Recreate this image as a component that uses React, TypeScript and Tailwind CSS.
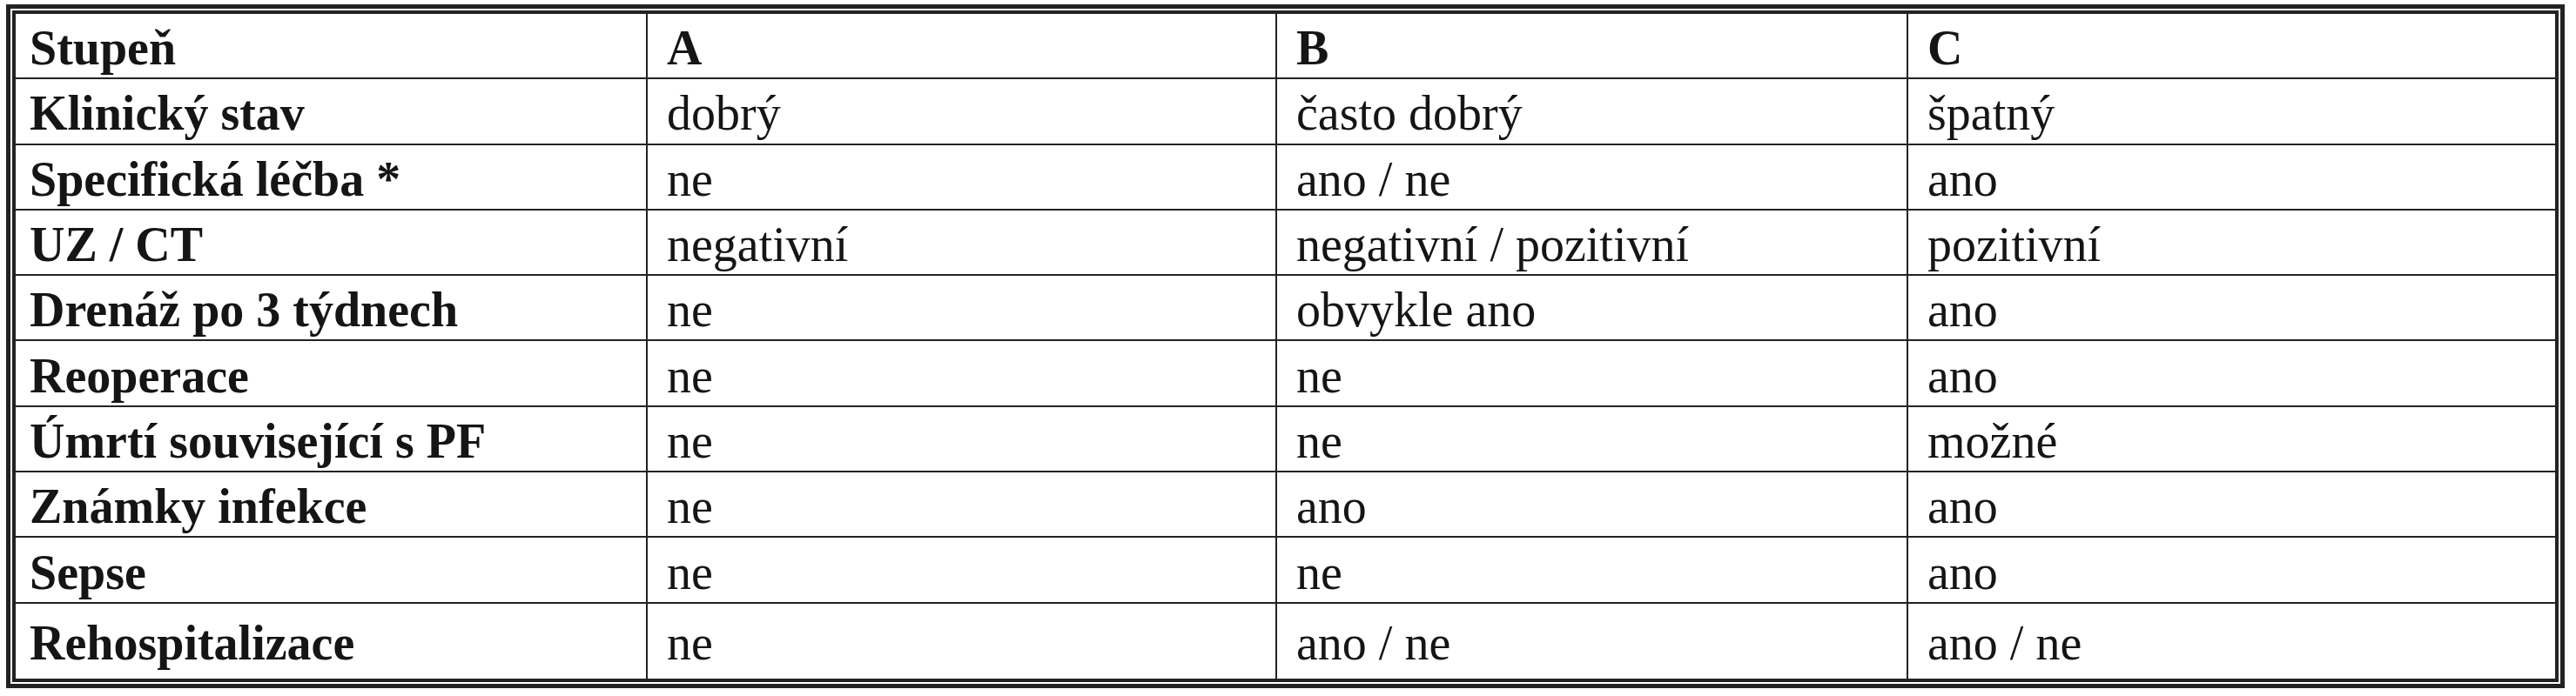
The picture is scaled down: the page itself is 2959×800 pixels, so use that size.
const rows: [string, string, string, string][] = [
  ['Stupeň', 'A', 'B', 'C'],
  ['Klinický stav', 'dobrý', 'často dobrý', 'špatný'],
  ['Specifická léčba *', 'ne', 'ano / ne', 'ano'],
  ['UZ / CT', 'negativní', 'negativní / pozitivní', 'pozitivní'],
  ['Drenáž po 3 týdnech', 'ne', 'obvykle ano', 'ano'],
  ['Reoperace', 'ne', 'ne', 'ano'],
  ['Úmrtí související s PF', 'ne', 'ne', 'možné'],
  ['Známky infekce', 'ne', 'ano', 'ano'],
  ['Sepse', 'ne', 'ne', 'ano'],
  ['Rehospitalizace', 'ne', 'ano / ne', 'ano / ne'],
];

export default function App() {
  return (
    <div className="w-[2959px] h-[800px] bg-white pl-[7px] pt-[5px] font-['Liberation_Serif','Times_New_Roman',serif] text-[#151515]">
      <div className="w-[2939px] h-[786px] border-[5px] border-[#222] p-[2px]">
        <div className="h-full border-[4px] border-[#222] flex flex-col">
          {rows.map((row, i) => (
            <div
              key={i}
              className={`grid grid-cols-[724px_723px_725px_1fr] ${
                i === rows.length - 1 ? 'flex-1' : 'h-[75.3px] border-b-[2px] border-[#222]'
              }`}
            >
              {row.map((cell, j) => (
                <div
                  key={j}
                  className={`flex items-center pt-[5px] ${j === 0 ? 'pl-[16px] font-bold' : 'pl-[22px] border-l-[2px] border-[#222]'} ${
                    i === 0 && j > 0 ? 'font-bold' : ''
                  } text-[56px] leading-none whitespace-nowrap`}
                >
                  {cell}
                </div>
              ))}
            </div>
          ))}
        </div>
      </div>
    </div>
  );
}
